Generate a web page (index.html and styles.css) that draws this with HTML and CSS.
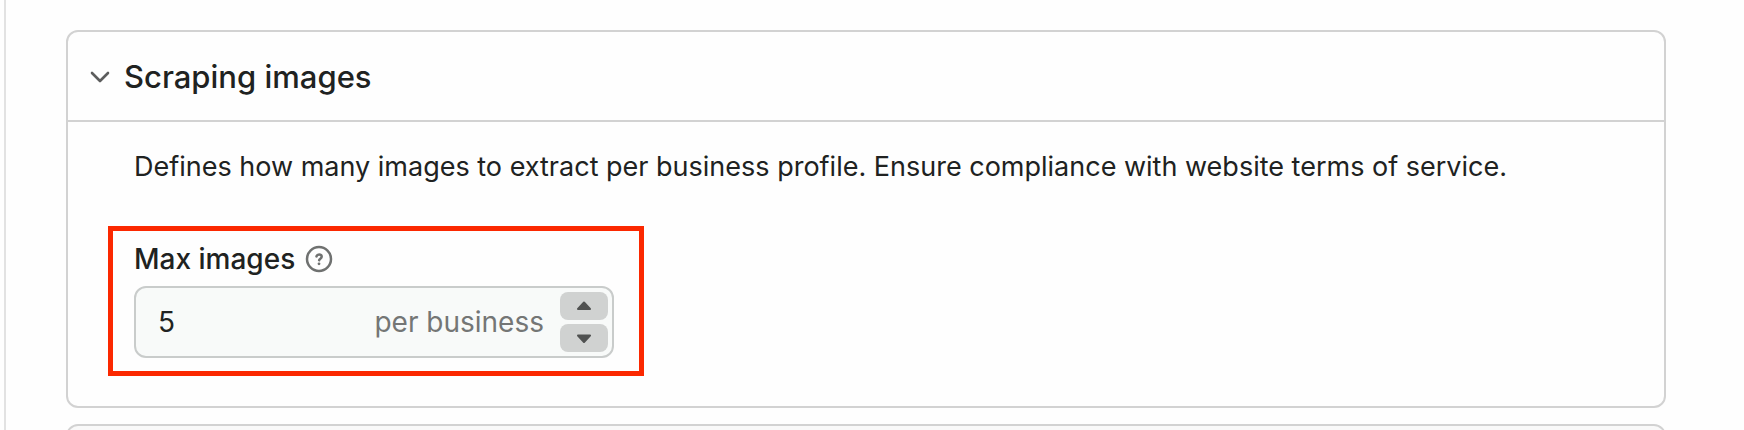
FILE: index.html
```html
<!DOCTYPE html>
<html lang="en">
<head>
<meta charset="utf-8">
<title>Scraping images</title>
<link rel="stylesheet" href="styles.css">
</head>
<body>
<main class="panel">
  <section class="card">
    <h2 class="card-title">
      <button class="card-toggle" type="button" aria-expanded="true" aria-controls="images-body">
        <svg class="chevron" viewBox="0 0 24 24" aria-hidden="true"><path d="M4 8l8 8 8-8"/></svg>
        Scraping images
      </button>
    </h2>
    <div class="card-body" id="images-body">
      <p class="description">Defines how many images to extract per business profile. Ensure compliance with website terms of service.</p>
      <div class="highlight">
        <div class="label-row">
          <label for="max-images">Max images</label>
          <button class="help" type="button" aria-label="Help">
            <svg viewBox="0 0 28 28" aria-hidden="true">
              <circle cx="14" cy="14" r="12"/>
              <path class="mark" d="M11.500 11.400c.4-1.200 1.400-1.800 2.600-1.800 1.500 0 2.600.9 2.600 2.200 0 1.800-2.500 1.900-2.600 3.500"/>
              <circle class="dot" cx="14" cy="18.800" r="1.400"/>
            </svg>
          </button>
        </div>
        <div class="field">
          <input class="value" id="max-images" type="text" inputmode="numeric" value="5">
          <span class="unit">per business</span>
          <div class="stepper">
            <button class="step" type="button" aria-label="Increase"><svg viewBox="0 0 16 10" aria-hidden="true"><path d="M8 1.500l6 6.500h-12z"/></svg></button>
            <button class="step" type="button" aria-label="Decrease"><svg viewBox="0 0 16 10" aria-hidden="true"><path d="M8 9l6-6.500h-12z"/></svg></button>
          </div>
        </div>
      </div>
    </div>
  </section>
  <section class="card card-next" aria-label="Next section"></section>
</main>
</body>
</html>
```
FILE: styles.css
```css
* {
  box-sizing: border-box;
}

body {
  margin: 0;
  background: #fefefe;
  color: #202221;
  font-family: Inter, "Liberation Sans", sans-serif;
  font-size: 28px;
  line-height: 40px;
}

button,
input {
  margin: 0;
  padding: 0;
  border: 0;
  background: none;
  color: inherit;
  font: inherit;
}

button {
  cursor: pointer;
}

.panel {
  display: flex;
  flex-direction: column;
  gap: 16px;
  min-height: 100vh;
  margin-left: 4px;
  padding: 30px 78px 0 60px;
  border-left: 2px solid #e2e2e2;
}

.card {
  border: 2px solid #d2d2d2;
  border-radius: 12px;
}

.card-next {
  position: relative;
  flex: 1;
  overflow: hidden;
  border: 0;
  border-radius: 0;
}

.card-next::before {
  content: "";
  position: absolute;
  inset: 0 0 auto;
  height: 80px;
  border: 2px solid #d2d2d2;
  border-radius: 12px;
  background: #f9f9f9;
}

.card-title {
  margin: 0;
  border-bottom: 2px solid #d2d2d2;
  font-size: 31px;
  font-weight: 500;
}

.card-toggle {
  display: flex;
  align-items: center;
  gap: 12px;
  width: 100%;
  padding: 25px 20px 23px;
  text-align: left;
}

.chevron {
  width: 24px;
  height: 24px;
  fill: none;
  stroke: #5c5d5d;
  stroke-width: 2.6;
  stroke-linecap: round;
  stroke-linejoin: round;
}

.card-body {
  padding: 25px 40px 30px;
}

.description {
  margin: 0 26px 39px;
  font-size: 27px;
}

.highlight {
  width: 536px;
  max-width: 100%;
  padding: 8px 25px 13px 21px;
  border: 5px solid #fb2800;
}

.label-row {
  display: flex;
  align-items: center;
  gap: 10px;
  margin-bottom: 7px;
  font-weight: 500;
}

.help {
  display: flex;
}

.help svg {
  width: 28px;
  height: 28px;
  fill: none;
  stroke: #6f7170;
  stroke-width: 2.5;
}

.help .mark {
  stroke-linecap: round;
}

.help .dot {
  fill: #6f7170;
  stroke: none;
}

.field {
  display: flex;
  align-items: center;
  height: 72px;
  padding: 0 4px 0 22px;
  border: 2px solid #c9cccb;
  border-radius: 12px;
  background: #f8faf9;
}

.value {
  flex: 1;
  min-width: 0;
  outline: 0;
}

.unit {
  margin-right: 16px;
  color: #747675;
}

.stepper {
  display: flex;
  flex-direction: column;
  gap: 4px;
}

.step {
  display: flex;
  align-items: center;
  justify-content: center;
  width: 48px;
  height: 28px;
  border-radius: 8px;
  background: #d0d2d1;
}

.step svg {
  width: 16px;
  height: 10px;
  fill: #505251;
  stroke: #505251;
  stroke-width: 2;
  stroke-linejoin: round;
}
```
